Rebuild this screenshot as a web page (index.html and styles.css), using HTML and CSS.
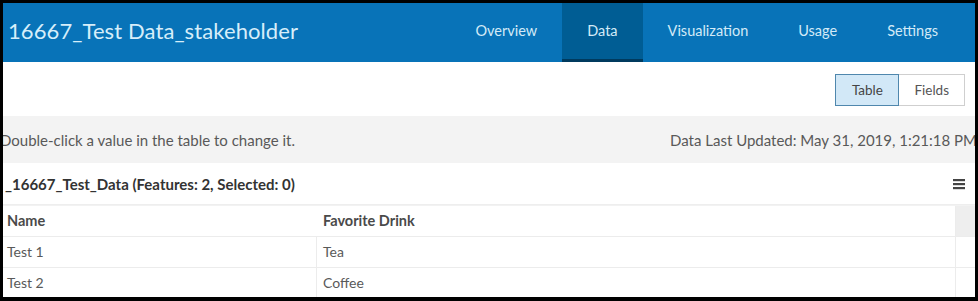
FILE: index.html
```html
<!DOCTYPE html>
<html lang="en">
<head>
  <meta charset="UTF-8" />
  <title>16667_Test Data_stakeholder</title>
  <link rel="stylesheet" href="styles.css">
</head>
<body>
  <div class="frame">
    <header class="top-bar">
      <div class="item-title">16667_Test Data_stakeholder</div>
      <nav class="tabs">
        <a class="tab">Overview</a>
        <a class="tab active">Data</a>
        <a class="tab">Visualization</a>
        <a class="tab">Usage</a>
        <a class="tab">Settings</a>
      </nav>
    </header>

    <div class="toolbar">
      <div class="btn-group">
        <button class="seg-btn selected">Table</button>
        <button class="seg-btn">Fields</button>
      </div>
    </div>

    <div class="info-bar">
      <span class="hint">Double-click a value in the table to change it.</span>
      <span class="updated">Data Last Updated: May 31, 2019, 1:21:18 PM</span>
    </div>

    <div class="layer-head">
      <span class="layer-name">_16667_Test_Data (Features: 2, Selected: 0)</span>
      <svg class="menu-icon" width="12" height="12" viewBox="0 0 12 12">
        <rect x="0" y="1" width="12" height="2.2" fill="#444"/>
        <rect x="0" y="5" width="12" height="2.2" fill="#444"/>
        <rect x="0" y="9" width="12" height="2.2" fill="#444"/>
      </svg>
    </div>

    <div class="grid">
      <div class="row head">
        <div class="cell c1">Name</div>
        <div class="cell c2">Favorite Drink</div>
        <div class="cell scroll"></div>
      </div>
      <div class="row">
        <div class="cell c1">Test 1</div>
        <div class="cell c2">Tea</div>
        <div class="cell scroll"></div>
      </div>
      <div class="row">
        <div class="cell c1">Test 2</div>
        <div class="cell c2">Coffee</div>
        <div class="cell scroll"></div>
      </div>
    </div>
  </div>
</body>
</html>
```

FILE: styles.css
```css
* { margin: 0; padding: 0; box-sizing: border-box; font-family: Lato, 'Open Sans', sans-serif; }
body { background: #000; }

.frame {
  width: 978px;
  height: 301px;
  border: 3px solid #000;
  border-bottom-width: 4px;
  background: #fff;
  overflow: hidden;
}

.top-bar {
  height: 59px;
  background: #0873b8;
  display: flex;
  align-items: stretch;
  justify-content: space-between;
}

.item-title {
  color: #d6eefa;
  font-size: 22px;
  line-height: 56px;
  padding-left: 5px;
  letter-spacing: 0.1px;
}

.tabs { display: flex; padding-right: 12px; }

.tab {
  color: #d3eaf7;
  font-size: 14.5px;
  line-height: 56px;
  padding: 0 25px;
  border-bottom: 3px solid transparent;
}

.tab.active {
  background: #005d94;
  border-bottom-color: #003a5e;
}

.toolbar {
  height: 54px;
  display: flex;
  justify-content: flex-end;
  align-items: center;
  padding-right: 10px;
  padding-top: 1px;
}

.btn-group { display: flex; }

.seg-btn {
  height: 32px;
  padding: 0 15px;
  font-size: 13.5px;
  color: #555;
  background: #fff;
  border: 1px solid #cfcfcf;
  border-left: none;
  min-width: 65px;
}

.seg-btn.selected {
  background: #d2e8f7;
  border: 1px solid #4f87ad;
  color: #444;
  min-width: 64px;
}

.info-bar {
  height: 47px;
  background: #f3f3f3;
  display: flex;
  justify-content: space-between;
  align-items: center;
  color: #595959;
  font-size: 15px;
}

.hint { margin-left: -3px; }
.updated { margin-right: -2px; }

.layer-head {
  height: 42px;
  display: flex;
  justify-content: space-between;
  align-items: center;
  padding: 0 10px 0 2px;
  border-bottom: 1px solid #eee;
}

.layer-name { font-size: 15px; font-weight: 700; color: #333; }

.grid { border-top: 1px solid #f2f2f2; }

.row {
  display: flex;
  height: 31px;
  border-bottom: 1px solid #ececec;
}

.cell {
  font-size: 14px;
  line-height: 30px;
  color: #595959;
  padding-left: 4px;
}

.c1 { width: 314px; border-right: 1px solid #ececec; }
.c2 { width: 639px; padding-left: 6px; border-right: 1px solid #ececec; }
.scroll { flex: 1; }

.row.head .cell { font-weight: 700; color: #4a4a4a; font-size: 14.5px; }
.row.head .scroll { background: #eeeeee; }
.row.head .c1 { border-right-color: transparent; }
```
